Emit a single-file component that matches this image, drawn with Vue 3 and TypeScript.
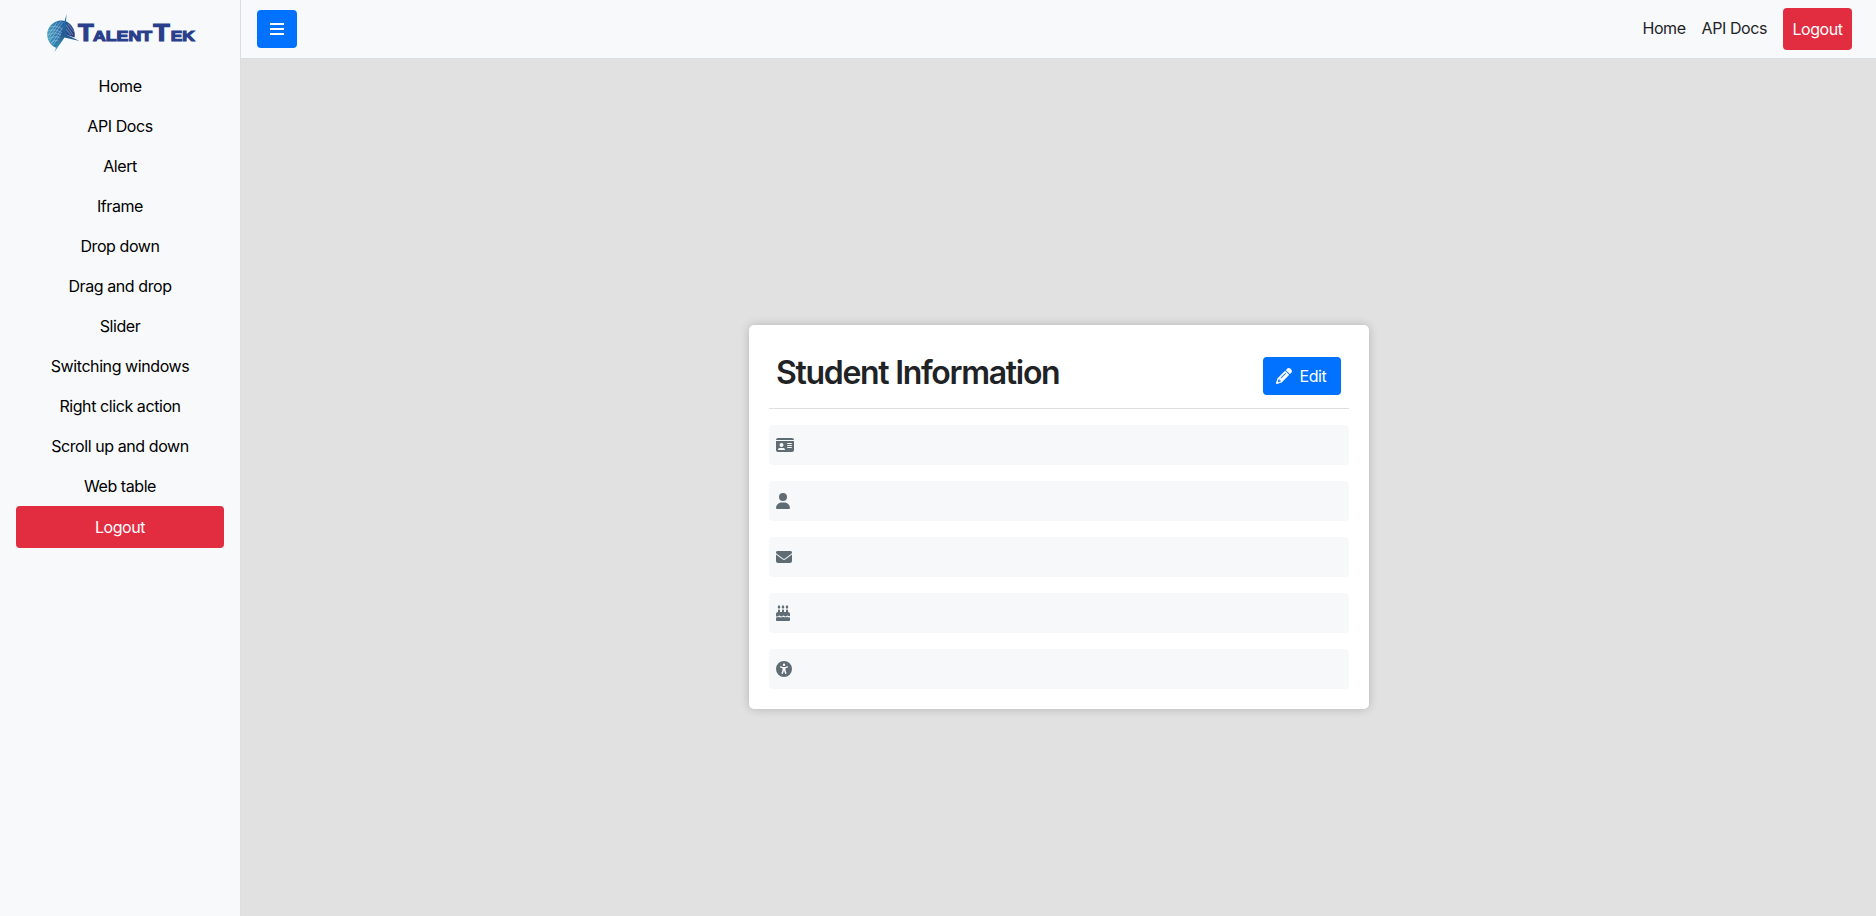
<script setup lang="ts">
interface Icon {
  name: string
  width: number
  path: string
}

const links: string[] = [
  'Home',
  'API Docs',
  'Alert',
  'Iframe',
  'Drop down',
  'Drag and drop',
  'Slider',
  'Switching windows',
  'Right click action',
  'Scroll up and down',
  'Web table',
]

const candle = (x: number): string =>
  `M${x - 9.6} 5.5L${x - 34.2} 47.6C${x - 38} 54.1 ${x - 40} 61.6 ${x - 40} 69.2V72c0 22.1 17.9 40 40 40s40-17.9 40-40V69.2c0-7.6-2-15-5.8-21.6L${x + 9.6} 5.5C${x + 7.6} 2.1 ${x + 4} 0 ${x} 0s-7.6 2.1-9.6 5.5z`

const fields: Icon[] = [
  {
    name: 'id',
    width: 576,
    path: 'M0 96l576 0c0-35.3-28.7-64-64-64H64C28.7 32 0 60.7 0 96zm0 32V416c0 35.3 28.7 64 64 64H512c35.3 0 64-28.7 64-64V128H0zM64 405.3c0-29.5 23.9-53.3 53.3-53.3H234.7c29.5 0 53.3 23.9 53.3 53.3c0 5.9-4.8 10.7-10.7 10.7H74.7c-5.9 0-10.7-4.8-10.7-10.7zM176 192a64 64 0 1 1 0 128 64 64 0 1 1 0-128zm176 16c0-8.8 7.2-16 16-16H496c8.8 0 16 7.2 16 16s-7.2 16-16 16H368c-8.8 0-16-7.2-16-16zm0 64c0-8.8 7.2-16 16-16H496c8.8 0 16 7.2 16 16s-7.2 16-16 16H368c-8.8 0-16-7.2-16-16zm0 64c0-8.8 7.2-16 16-16H496c8.8 0 16 7.2 16 16s-7.2 16-16 16H368c-8.8 0-16-7.2-16-16z',
  },
  {
    name: 'user',
    width: 448,
    path: 'M224 256A128 128 0 1 0 224 0a128 128 0 1 0 0 256zm-45.7 48C79.8 304 0 383.8 0 482.3C0 498.7 13.3 512 29.7 512H418.3c16.4 0 29.7-13.3 29.7-29.7C448 383.8 368.2 304 269.7 304H178.3z',
  },
  {
    name: 'email',
    width: 512,
    path: 'M48 64C21.5 64 0 85.5 0 112c0 15.1 7.1 29.3 19.2 38.4L236.8 313.6c11.4 8.5 27 8.5 38.4 0L492.8 150.4c12.1-9.1 19.2-23.3 19.2-38.4c0-26.5-21.5-48-48-48H48zM0 176V384c0 35.3 28.7 64 64 64H448c35.3 0 64-28.7 64-64V176L294.4 339.2c-22.8 17.1-54 17.1-76.8 0L0 176z',
  },
  {
    name: 'birthday',
    width: 448,
    path:
      candle(96) + candle(224) + candle(352) +
      'M128 176c0-17.7-14.3-32-32-32s-32 14.3-32 32v48c-35.3 0-64 28.7-64 64v71c0 0 19 9 38.4 9c20 0 37-16 55-26c8-4 18-4 26 0c18 10 34 26 52 26s34-16 52-26c8-4 18-4 26 0c18 10 34 26 52 26s34-16 52-26c8-4 18-4 26 0L448 359V288c0-35.3-28.7-64-64-64V176c0-17.7-14.3-32-32-32s-32 14.3-32 32v48H256V176c0-17.7-14.3-32-32-32s-32 14.3-32 32v48H128zM448 394c-35 14-65 0-82-20c-27 20-80 34-142 0c-46 32-92 32-132 0c-27 20-57 34-92 20V480c0 17.7 14.3 32 32 32H416c17.7 0 32-14.3 32-32z',
  },
  {
    name: 'gender',
    width: 512,
    path: 'M0 256a256 256 0 1 1 512 0A256 256 0 1 1 0 256zm161.5-86.1c-12.2-5.2-26.3 .4-31.5 12.6s.4 26.3 12.6 31.5l11.9 5.1c17.3 7.4 35.2 12.9 53.6 16.3v50.1c0 4.3-.7 8.6-2.1 12.6l-28.7 86.1c-4.2 12.6 2.6 26.2 15.2 30.4s26.2-2.6 30.4-15.2l24.4-73.2c1.3-3.8 4.8-6.4 8.8-6.4s7.6 2.6 8.8 6.4l24.4 73.2c4.2 12.6 17.8 19.4 30.4 15.2s19.4-17.8 15.2-30.4l-28.7-86.1c-1.4-4.1-2.1-8.3-2.1-12.6V235.5c18.4-3.5 36.3-8.9 53.6-16.3l11.9-5.1c12.2-5.2 17.8-19.3 12.6-31.5s-19.3-17.8-31.5-12.6L338.7 175c-26.1 11.1-54.2 17-82.7 17s-56.5-5.8-82.7-17l-11.9-5.1zM256 160a40 40 0 1 0 0-80 40 40 0 1 0 0 80z',
  },
]
</script>

<template>
  <div class="page">
    <aside class="sidebar">
      <svg class="logo" width="160" height="50" viewBox="40 8 160 50" role="img" aria-label="TalentTek">
        <defs>
          <linearGradient id="globe" x1="0" x2="1">
            <stop offset="0" stop-color="#3f9fc0" />
            <stop offset="0.5" stop-color="#2569a6" />
            <stop offset="1" stop-color="#293579" />
          </linearGradient>
          <linearGradient id="spike" x1="0" y1="1" x2="0.5" y2="0">
            <stop offset="0" stop-color="#48b2c4" />
            <stop offset="0.5" stop-color="#22598f" />
            <stop offset="1" stop-color="#2d7cae" />
          </linearGradient>
        </defs>
        <path d="M56.5 48C48 45 44.500 34 49.500 27C54 20 64 18 70 24C74 28 75.500 33 74.500 37.500L64 34Z" fill="url(#globe)" />
        <g fill="none" stroke="#e6eff5" stroke-width="0.5" opacity="0.7">
          <path d="M49 42L63 22M51 44L64 26M53 45L63 31M48 39L61 21M47.5 36L57 22.5M66 25L73 35M66 29L71 35M68 24L74 32" />
          <path d="M50 27Q58 25 63 30M48 31Q56 28 62 33M48 35Q55 31 61 35M49 39Q55 35 60 38M51 43Q55 39 59 41" />
        </g>
        <path d="M66.500 14L65.300 34L79.500 41L64.500 37.500L54.500 52L61.500 33Z" fill="url(#spike)" />
        <g class="wordmark">
          <text x="78" y="41.300" font-size="24" textLength="15.700" lengthAdjust="spacingAndGlyphs">T</text>
          <text x="93" y="41.300" font-size="15.500" textLength="59" lengthAdjust="spacingAndGlyphs">ALENT</text>
          <text x="153.300" y="41.300" font-size="24" textLength="16.500" lengthAdjust="spacingAndGlyphs">T</text>
          <text x="170.800" y="41.300" font-size="15.500" textLength="24" lengthAdjust="spacingAndGlyphs">EK</text>
        </g>
      </svg>
      <nav class="menu">
        <a v-for="link in links" :key="link" class="menu-link">{{ link }}</a>
        <a class="logout">Logout</a>
      </nav>
    </aside>

    <div class="main">
      <header class="topbar">
        <button class="toggle" aria-label="Menu">
          <svg width="14" height="16" viewBox="0 0 448 512" fill="currentColor">
            <path d="M0 64H448V128H0zM0 224H448V288H0zM0 384H448V448H0z" />
          </svg>
        </button>
        <nav class="top-links">
          <a class="top-link">Home</a>
          <a class="top-link">API Docs</a>
          <a class="logout">Logout</a>
        </nav>
      </header>

      <main class="content">
        <section class="card">
          <div class="card-head">
            <h2>Student Information</h2>
            <button class="edit">
              <svg width="16" height="16" viewBox="0 0 512 512" fill="currentColor">
                <path d="M410.3 231l11.3-11.3-33.9-33.9-62.1-62.1L291.7 89.8l-11.3 11.3-22.6 22.6L58.6 322.9c-10.4 10.4-18 23.3-22.2 37.4L1 480.7c-2.5 8.4-.2 17.5 6.1 23.7s15.3 8.5 23.7 6.1l120.3-35.4c14.1-4.2 27-11.8 37.4-22.2L387.7 253.7 410.3 231zM160 399.4l-9.1 22.7c-4 3.1-8.5 5.4-13.3 6.9L59.4 452l23-78.1c1.4-4.9 3.8-9.4 6.9-13.3l22.7-9.1v32c0 8.8 7.2 16 16 16h32zM362.7 18.7L348.3 33.2 325.7 55.8 314.3 67.1l33.9 33.9 62.1 62.1 33.9 33.9 11.3-11.3 22.6-22.6 14.5-14.5c25-25 25-65.5 0-90.5L453.3 18.7c-25-25-65.5-25-90.5 0zm-47.4 168l-144 144c-6.2 6.2-16.4 6.2-22.6 0s-6.2-16.4 0-22.6l144-144c6.2-6.2 16.4-6.2 22.6 0s6.2 16.4 0 22.6z" />
              </svg>
              <span>Edit</span>
            </button>
          </div>
          <div class="rows">
            <div v-for="field in fields" :key="field.name" class="row">
              <svg :width="field.width / 32" height="16" :viewBox="`0 0 ${field.width} 512`" fill="currentColor">
                <path :d="field.path" fill-rule="evenodd" />
              </svg>
            </div>
          </div>
        </section>
      </main>
    </div>
  </div>
</template>

<style>
body {
  margin: 0;
}
</style>

<style scoped>
* {
  box-sizing: border-box;
}
.page {
  display: flex;
  height: 100vh;
  overflow: hidden;
  background: #e1e1e1;
  color: #1f2326;
  font-family: Inter, "Liberation Sans", sans-serif;
  font-size: 16px;
  font-weight: 430;
  line-height: 24px;
  letter-spacing: -0.42px;
}
.sidebar {
  width: 241px;
  flex: none;
  display: flex;
  flex-direction: column;
  padding-top: 8px;
  background: #f7f9fb;
  border-right: 1px solid #d8dee3;
}
.logo {
  display: block;
  margin: 0 40px 8px;
}
.wordmark {
  font-family: "Liberation Sans", sans-serif;
  font-weight: 700;
  letter-spacing: 0;
  fill: #293f8b;
  stroke: #293f8b;
  stroke-width: 1.2px;
}
.menu {
  display: flex;
  flex-direction: column;
  padding: 0 16px;
  text-align: center;
  color: #000;
}
.menu-link {
  padding: 8px;
}
.logout {
  height: 42px;
  padding: 9px;
  border-radius: 4px;
  background: #e12d3f;
  color: #fff;
  text-align: center;
}
.main {
  flex: 1;
  display: flex;
  flex-direction: column;
}
.topbar {
  height: 59px;
  flex: none;
  display: flex;
  align-items: center;
  justify-content: space-between;
  padding: 0 24px 0 16px;
  background: #f7f9fb;
  border-bottom: 1px solid #d8dee3;
}
button {
  border: 0;
  border-radius: 4px;
  background: #0072ff;
  color: #fff;
  font: inherit;
  letter-spacing: inherit;
}
.toggle {
  width: 40px;
  height: 38px;
  padding: 0;
  display: flex;
  align-items: center;
  justify-content: center;
}
.top-links {
  display: flex;
  align-items: center;
  gap: 16px;
}
.top-link {
  padding-bottom: 2px;
}
.top-links .logout {
  width: 69px;
}
.content {
  flex: 1;
  display: flex;
  justify-content: center;
  align-items: flex-start;
  padding: 266px 0 0 1px;
}
.card {
  width: 620px;
  height: 384px;
  padding: 20px;
  border-radius: 5px;
  background: #fff;
  box-shadow: 0 0 10px rgba(0, 0, 0, 0.2);
}
.card-head {
  height: 64px;
  display: flex;
  justify-content: space-between;
  padding: 8px 8px 0 7px;
  border-bottom: 1px solid #dddfe1;
}
h2 {
  margin: 0;
  font-size: 32px;
  line-height: 40px;
  font-weight: 560;
  letter-spacing: -1.3px;
}
.edit {
  width: 78px;
  height: 38px;
  margin-top: 4px;
  padding: 0 0 0 12.5px;
  display: flex;
  align-items: center;
  gap: 8px;
}
.rows {
  display: grid;
  gap: 16px;
  padding-top: 16px;
}
.row {
  height: 40px;
  display: flex;
  align-items: center;
  padding: 0 7.4px;
  border-radius: 4px;
  background: #f7f8fa;
  color: #606c73;
}
</style>
